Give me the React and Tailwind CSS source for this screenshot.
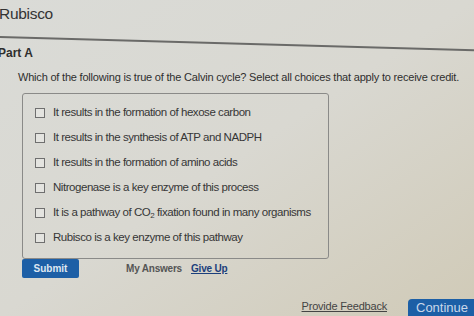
const choices = [
  'It results in the formation of hexose carbon',
  'It results in the synthesis of ATP and NADPH',
  'It results in the formation of amino acids',
  'Nitrogenase is a key enzyme of this process',
  'co2',
  'Rubisco is a key enzyme of this pathway',
]

function Choice({ text }) {
  return (
    <label className="flex items-center h-[25px] pl-[12px]">
      <span className="w-[10px] h-[10px] border border-[#6f6f6f] bg-[#e4e4e0] mr-[8px] shrink-0" />
      <span className="text-[11.5px] tracking-[-0.45px] text-[#363636]">
        {text === 'co2' ? (
          <>It is a pathway of CO<sub className="text-[8px]">2</sub> fixation found in many organisms</>
        ) : text}
      </span>
    </label>
  )
}

export default function App() {
  return (
    <div
      className="w-[474px] h-[316px] overflow-hidden bg-gradient-to-br from-[#dadbd7] via-[#d9d8d1] to-[#d0cab7]"
      style={{ fontFamily: '"Liberation Sans", Arial, sans-serif' }}
    >
      {/* Title */}
      <div className="pt-[5px] ml-[-1px] text-[15.5px] tracking-[-0.3px] text-[#333] leading-[18px]">Rubisco</div>

      <div className="mt-[13px] w-[500px] h-[2px] bg-[#6a6a68] rotate-[1.6deg] origin-left" />

      <div className="mt-[8px] ml-[-2px] text-[12px] font-bold text-[#2e2e2e] leading-[14px]">Part A</div>

      <p className="mt-[11px] ml-[18px] text-[11px] tracking-[-0.2px] text-[#2e2e2e] leading-[13px]">
        Which of the following is true of the Calvin cycle? Select all choices that apply to receive credit.
      </p>

      {/* Choices box */}
      <div className="mt-[9px] ml-[22px] w-[307px] h-[166px] border border-[#8a8a88] rounded-[3px] pt-[6px]">
        {choices.map(c => <Choice key={c} text={c} />)}
      </div>

      <div className="flex items-center mt-[0px] ml-[22px]">
        <button className="w-[57px] h-[19px] bg-[#1d5fa6] rounded-[2px] text-[10px] font-bold text-[#dfe8f2]">
          Submit
        </button>
        <span className="ml-[47px] text-[10px] font-bold tracking-[-0.2px] text-[#555]">My Answers</span>
        <a className="ml-[9px] text-[10px] font-bold tracking-[-0.2px] text-[#1b3f7c] underline">Give Up</a>
      </div>

      <div className="flex items-end justify-end mt-[20px]">
        <a className="mb-[1px] text-[11px] tracking-[-0.2px] text-[#444] underline">Provide Feedback</a>
        <button className="ml-[21px] w-[66px] h-[17px] bg-[#1c5fa6] rounded-tl-[4px] text-left pl-[8px] text-[13px] text-[#c9d8ea] leading-[18px]">
          Continue
        </button>
      </div>
    </div>
  )
}
